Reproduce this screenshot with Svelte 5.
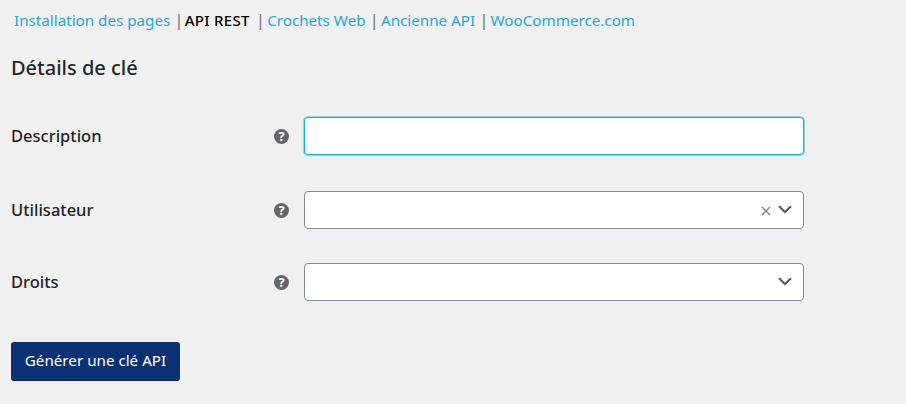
<script>
	const links = [
		{ label: 'Installation des pages' },
		{ label: 'API REST', current: true },
		{ label: 'Crochets Web' },
		{ label: 'Ancienne API' },
		{ label: 'WooCommerce.com' }
	];
</script>

<main class="wrap">
	<ul class="subnav">
		{#each links as link, i}
			<li>
				{#if i > 0}<span class="sep">|</span>{/if}
				<a href="#top" class:current={link.current}>{link.label}</a>
			</li>
		{/each}
	</ul>

	<h2>Détails de clé</h2>

	<form class="key-form" onsubmit={(e) => e.preventDefault()}>
		<div class="row row-first">
			<label for="desc">Description</label>
			<span class="help" aria-hidden="true">?</span>
			<input id="desc" type="text" class="focused" />
		</div>

		<div class="row">
			<label for="user">Utilisateur</label>
			<span class="help" aria-hidden="true">?</span>
			<div id="user" class="select">
				<svg class="clear" viewBox="0 0 10 10" width="10" height="10" aria-hidden="true">
					<path d="M1 1 9 9M9 1 1 9" />
				</svg>
				<svg class="chevron" viewBox="0 0 14 9" width="14" height="9" aria-hidden="true">
					<path d="M1 1.2 7 7.2 13 1.2" />
				</svg>
			</div>
		</div>

		<div class="row row-last">
			<label for="perm">Droits</label>
			<span class="help" aria-hidden="true">?</span>
			<div id="perm" class="select">
				<svg class="chevron" viewBox="0 0 14 9" width="14" height="9" aria-hidden="true">
					<path d="M1 1.2 7 7.2 13 1.2" />
				</svg>
			</div>
		</div>

		<button type="submit">Générer une clé API</button>
	</form>
</main>

<style>
	:global(body) {
		margin: 0;
		background: #f0f0f1;
		font-family: 'Noto Sans', 'Open Sans', sans-serif;
		color: #1d2327;
	}

	.wrap {
		padding: 10px 0 0 11px;
	}

	.subnav {
		display: flex;
		list-style: none;
		margin: 0;
		padding: 0 0 0 3px;
		font-size: 15.2px;
		line-height: 20px;
	}

	.subnav li {
		display: flex;
		white-space: nowrap;
	}

	.sep {
		color: #6f7377;
		font-size: 17px;
		margin-left: 4px;
		margin-right: 2px;
	}

	.subnav a {
		color: #1fa7dc;
		text-decoration: none;
	}

	.subnav a.current {
		color: #000;
		font-weight: 500;
		font-size: 15px;
		letter-spacing: 0.3px;
		padding-right: 2px;
		margin-left: -1px;
	}

	h2 {
		margin: 25px 0 0;
		font-size: 20px;
		line-height: 26px;
		font-weight: 500;
		color: #23282d;
	}

	.key-form {
		margin-top: 36px;
	}

	.row {
		display: flex;
		align-items: center;
		height: 38px;
		margin-bottom: 34px;
	}

	.row-first {
		margin-bottom: 36px;
	}

	.row-last {
		margin-bottom: 41px;
	}

	label {
		width: 263px;
		font-size: 16.5px;
		line-height: 22px;
		font-weight: 500;
		color: #1d2327;
		margin-top: -1px;
	}

	.help {
		width: 15px;
		height: 15px;
		border-radius: 50%;
		background: #646464;
		color: #f0f0f1;
		font-size: 12.5px;
		font-weight: 800;
		line-height: 15px;
		text-align: center;
		margin-right: 15px;
	}

	input,
	.select {
		box-sizing: border-box;
		width: 500px;
		height: 38px;
		background: #fff;
		border: 1px solid #868b92;
		border-radius: 4px;
		margin: 0;
		padding: 0;
	}

	input.focused {
		border-color: #12b0dc;
		box-shadow: 0 0 0 1px rgba(18, 176, 220, 0.45);
		outline: 0;
	}

	.select {
		display: flex;
		align-items: center;
		justify-content: flex-end;
		padding-right: 11px;
	}

	.clear {
		fill: none;
		stroke: #8a8f8c;
		stroke-width: 1.6;
		margin-right: 7px;
		margin-top: 2px;
	}

	.chevron {
		fill: none;
		stroke: #50575e;
		stroke-width: 2;
		margin-top: -1px;
	}

	button {
		display: block;
		box-sizing: border-box;
		width: 169px;
		height: 39px;
		padding: 0 0 2px;
		background: #0a3174;
		border: 0;
		border-bottom: 1px solid #06265c;
		border-radius: 3px;
		color: #fff;
		font-family: inherit;
		font-size: 15.2px;
	}
</style>
